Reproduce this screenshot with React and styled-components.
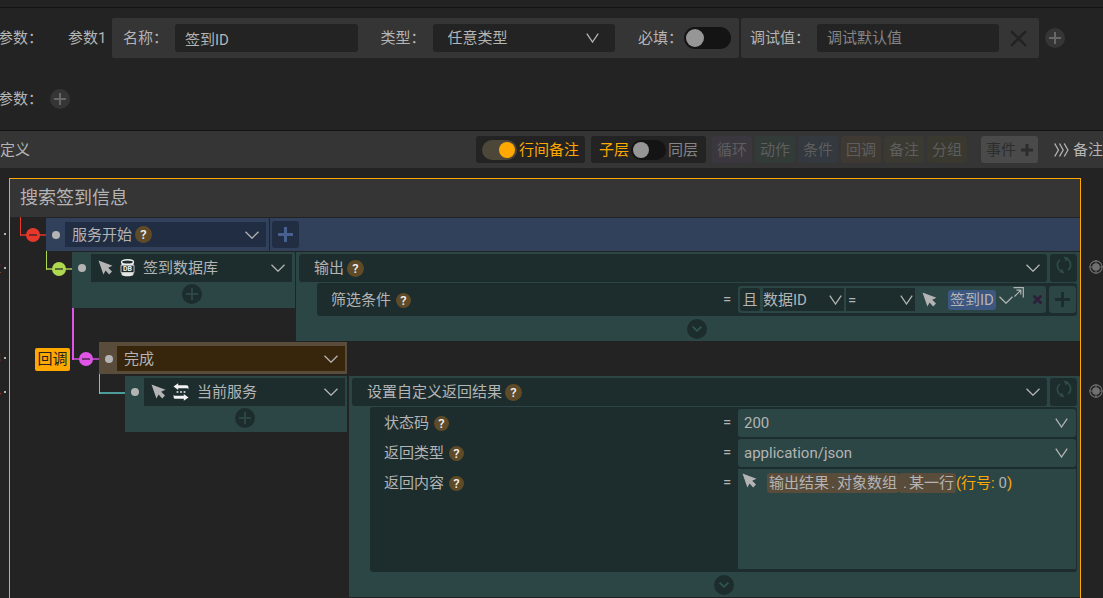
import React, { useState } from "react";
import styled, { createGlobalStyle } from "styled-components";

const GlobalStyle = createGlobalStyle`
  * {
    box-sizing: border-box;
  }

  body {
    margin: 0;
    background: #232323;
    color: #b4b4b4;
    font-family: Roboto, "Noto Sans CJK SC", sans-serif;
    font-size: 15px;
    line-height: 20px;
    overflow: hidden;
  }

  button,
  input,
  select {
    margin: 0;
    padding: 0;
    border: 0;
    color: inherit;
    font: inherit;
  }

  button {
    flex: none;
    cursor: pointer;
  }
`;

const tones = {
  blue: { block: "#31405b", cell: "#202d42" },
  teal: { block: "#2c4646", cell: "#1d2d2d" },
  brown: { block: "#5a4c3b", cell: "#38260c" },
};

const Page = styled.div`
  display: flex;
  flex-direction: column;
  height: 100vh;
  overflow: hidden;
  white-space: nowrap;
`;

const TopEdge = styled.div`
  flex: none;
  height: 8px;
  border-bottom: 1px solid #141414;
`;

/* params */

const Params = styled.section`
  display: flex;
  flex: none;
  flex-direction: column;
  gap: 21px;
  padding: 10px 38px 11px 0;
`;

const ParamRow = styled.div`
  display: flex;
  align-items: center;
  height: 40px;
`;

const ParamTitle = styled.div`
  display: flex;
  flex: none;
  justify-content: flex-end;
  width: 43px;
  margin-right: 7px;
`;

const ParamIndex = styled.div`
  flex: none;
  width: 44px;
  margin-left: 18px;
`;

const ParamCard = styled.div`
  display: flex;
  flex: ${(props) => props.$grow} 1 ${(props) => props.$basis}px;
  align-items: center;
  min-width: 0;
  height: 40px;
  padding: ${(props) => props.$padding};
  margin-right: ${(props) => props.$gap}px;
  background: #353535;
  border-radius: 2px;
`;

const FieldLabel = styled.label`
  flex: none;
  margin-right: ${(props) => (props.$tight ? 1 : 7)}px;
`;

const TextInput = styled.input`
  flex: 1;
  min-width: 0;
  height: 28px;
  padding: 0 10px;
  background: #232323;
  border-radius: 3px;
  outline: none;

  &::placeholder {
    color: #858585;
  }
`;

const DarkSelect = styled.div`
  position: relative;
  display: flex;
  flex: 1;
  align-items: center;
  min-width: 0;
  height: 28px;
  margin-right: 23px;
  background: #232323;
  border-radius: 3px;
`;

const NameSlot = styled.div`
  display: flex;
  flex: 1;
  min-width: 0;
  margin-right: 23px;
`;

const ClearButton = styled.button`
  display: flex;
  padding: 0 3px 0 11px;
  background: none;
  color: #232323;
`;

const RoundButton = styled.button`
  display: flex;
  align-items: center;
  justify-content: center;
  width: 20px;
  height: 20px;
  background: ${(props) => props.$bg};
  border-radius: 50%;
  color: ${(props) => props.$color};
`;

const Switch = styled.input`
  display: flex;
  flex: none;
  align-items: center;
  width: ${(props) => props.$width}px;
  height: ${(props) => props.$height}px;
  padding: 0 2px;
  appearance: none;
  background: #141414;
  border-radius: 11px;
  cursor: pointer;

  &::before {
    content: "";
    width: ${(props) => props.$knob}px;
    height: ${(props) => props.$knob}px;
    background: #969696;
    border-radius: 50%;
  }

  &:checked {
    justify-content: flex-end;
    background: #4d473a;
  }

  &:checked::before {
    background: #ffa800;
  }
`;

/* toolbar */

const Toolbar = styled.header`
  display: flex;
  flex: none;
  align-items: center;
  height: 38px;
  background: #353535;
  border-top: 1px solid #141414;
`;

const ToolbarTitle = styled.div`
  margin-right: auto;
`;

const Pill = styled.label`
  display: flex;
  flex: none;
  gap: 2px;
  align-items: center;
  height: 27px;
  padding: 0 ${(props) => props.$padding}px;
  margin-right: 6px;
  background: #232323;
  border-radius: 3px;
`;

const PillText = styled.span`
  color: ${(props) => (props.$active ? "#ffa800" : "#858585")};
`;

const TypeButtons = styled.div`
  display: flex;
  flex: none;
  gap: 3px;
`;

const TypeButton = styled.button`
  width: 40px;
  height: 27px;
  background: ${(props) => props.$bg};
  border-radius: 3px;
  color: #5e5e5e;
`;

const EventButton = styled.button`
  display: flex;
  gap: 5px;
  align-items: center;
  height: 27px;
  padding: 0 5px;
  margin: 0 16px 0 14px;
  background: #4a4a4a;
  border-radius: 3px;
  color: #2d2d2d;
`;

const MoreButton = styled.button`
  display: flex;
  gap: 4px;
  align-items: center;
  width: 49px;
  background: none;
`;

/* workflow board */

const Board = styled.main`
  display: grid;
  flex: 1;
  grid-template-columns: 9px minmax(0, 1fr) 22px;
  min-height: 0;
  padding-top: 10px;
`;

const Gutter = styled.div`
  display: flex;
  flex-direction: column;
  padding-top: 40px;
  overflow: hidden;
`;

const GutterLine = styled.div`
  display: flex;
  flex: none;
  gap: 3px;
  align-items: center;
  justify-content: flex-end;
  width: 100%;
  height: 32px;
  padding-right: 3px;
  margin-bottom: ${(props) => props.$after}px;
  color: ${(props) => props.$color};

  &::after {
    content: "";
    flex: none;
    width: 2px;
    height: 2px;
    background: #b4b4b4;
  }
`;

const BreakPoint = styled.div`
  display: flex;
  flex: none;
  align-items: center;
  justify-content: center;
  height: 30px;
  padding-left: 8px;
  margin-bottom: ${(props) => props.$after}px;
  color: #707070;

  &:first-child {
    margin-top: 34px;
  }
`;

const Flow = styled.section`
  display: flex;
  flex-direction: column;
  border: 1px solid #ffa800;
  border-bottom: 0;
`;

const FlowTitle = styled.h2`
  flex: none;
  height: 38px;
  padding-left: 10px;
  margin: 0 0 1px;
  background: #353535;
  font-size: 18px;
  font-weight: 400;
  line-height: 38px;
`;

const Step = styled.div`
  display: flex;
  flex: none;
  align-items: flex-start;
  padding-left: ${(props) => props.$indent}px;
  margin-bottom: 1px;
`;

const StepTag = styled.div`
  flex: none;
  width: 35px;
  height: 23px;
  margin: 6px 2px 0 0;
  background: #ffa800;
  border-radius: 2px;
  color: #232323;
  line-height: 23px;
  text-align: center;
`;

const Branch = styled.div`
  position: relative;
  display: flex;
  flex: none;
  align-items: center;
  justify-content: center;
  width: ${(props) => (props.$thick ? 27 : 26)}px;
  height: 33px;
  padding-top: 1px;

  &::before,
  &::after {
    content: "";
    position: absolute;
    left: 0;
    background: ${(props) => props.$color};
  }

  &::before {
    top: ${(props) => -props.$rise}px;
    width: ${(props) => (props.$thick ? 2 : 1)}px;
    height: ${(props) => props.$rise + 18}px;
  }

  &::after {
    top: 16px;
    right: 0;
    height: 2px;
    opacity: 0.7;
  }
`;

const FoldButton = styled.button`
  position: relative;
  z-index: 1;
  display: flex;
  align-items: center;
  justify-content: center;
  width: 14px;
  height: 14px;
  background: ${(props) => props.$color};
  border-radius: 50%;

  &::before {
    content: "";
    width: 8px;
    height: 2px;
    background: #23232399;
  }
`;

const Block = styled.div`
  flex: ${(props) => (props.$width ? `0 0 ${props.$width}px` : "1 1 0")};
  min-width: 0;
  height: ${(props) => (props.$height ? `${props.$height}px` : "auto")};
  padding: ${(props) => props.$padding || "0"};
  margin-right: ${(props) => props.$gap || 0}px;
  background: ${(props) => tones[props.$tone].block};
`;

const HeadLine = styled.div`
  display: flex;
  align-items: center;
`;

const Handle = styled.span`
  flex: none;
  width: 8px;
  height: 8px;
  margin: 0 ${(props) => props.$side}px 0 6px;
  background: #b4b4b4;
  border-radius: 50%;
`;

const Cell = styled.div`
  display: flex;
  flex: 1;
  align-items: center;
  min-width: 0;
  height: ${(props) => props.$height}px;
  padding: 0 7px 0 ${(props) => props.$inset}px;
  background: ${(props) => tones[props.$tone].cell};
  border-radius: ${(props) => (props.$round ? 3 : 0)}px;
`;

const InlineSelect = styled.select`
  flex: none;
  field-sizing: content;
  appearance: none;
  background: none;
  outline: none;
  cursor: pointer;
`;

const FillSelect = styled.select`
  flex: 1;
  width: 100%;
  min-width: 0;
  height: 100%;
  padding: 0 24px 0 ${(props) => props.$inset}px;
  appearance: none;
  background: none;
  outline: none;
  cursor: pointer;
`;

/* sits on top of the select, clicks go through to it */
const SelectArrow = styled.span`
  position: absolute;
  right: ${(props) => props.$right}px;
  display: flex;
  pointer-events: none;
`;

const CellArrow = styled.span`
  display: flex;
  margin-left: auto;
`;

const CellIcons = styled.span`
  display: flex;
  flex: none;
  gap: 7px;
  align-items: center;
  margin-right: 8px;
`;

const Help = styled.button`
  width: ${(props) => props.$size}px;
  height: ${(props) => props.$size}px;
  margin-left: ${(props) => props.$space}px;
  background: #5f4b27;
  border-radius: 50%;
  color: #f0f0f0;
  font-size: 13px;
  font-weight: 500;
  line-height: ${(props) => props.$size}px;
`;

const SquareButton = styled.button`
  display: flex;
  align-items: center;
  justify-content: center;
  width: 27px;
  height: ${(props) => props.$height}px;
  background: ${(props) => props.$bg};
  border-radius: 3px;
  color: ${(props) => props.$color};
`;

const RefreshButton = styled(SquareButton)`
  align-items: flex-start;
  padding-top: 2px;
`;

const Center = styled.div`
  display: flex;
  align-items: center;
  justify-content: center;
  height: ${(props) => props.$height}px;
  padding-left: ${(props) => props.$shift || 0}px;
`;

const Detail = styled.div`
  padding-left: 18px;
`;

const DetailPanel = styled.div`
  display: flex;
  flex-direction: column;
  gap: 2px;
  padding: ${(props) => props.$padding};
  margin-top: 1px;
  background: #1d2d2d;
  border-radius: 3px;
`;

const DetailRow = styled.div`
  display: grid;
  grid-template-columns: minmax(0, 1fr) 15px 338px;
`;

const DetailLabel = styled.div`
  display: flex;
  align-items: center;
  height: 28px;
`;

const Equals = styled.span`
  height: 26px;
  line-height: 26px;
`;

const Field = styled.div`
  position: relative;
  display: flex;
  align-items: center;
  height: 28px;
  background: #2c4646;
  border-radius: 3px;
`;

const ConditionRow = styled.div`
  display: flex;
  gap: 3px;
`;

const Condition = styled.div`
  display: flex;
  flex: 1;
  align-items: center;
  height: 27px;
  padding: 0 4px 0 2px;
  background: #2c4646;
  border-radius: 3px;
`;

const LogicButton = styled.button`
  width: 20px;
  height: 23px;
  margin-right: 3px;
  background: #1d2d2d;
  border-radius: 3px;
`;

const ConditionSelect = styled.div`
  position: relative;
  display: flex;
  flex: 0 0 ${(props) => props.$width}px;
  align-items: center;
  height: 23px;
  margin-right: 2px;
  background: #1d2d2d;
`;

const ValueIcon = styled.span`
  display: flex;
  margin-left: 5px;
`;

const ValueTag = styled.span`
  height: 20px;
  padding: 0 2px;
  margin: 0 3px 0 11px;
  background: #3c5780;
  border-radius: 3px;
`;

const CornerButton = styled.button`
  display: flex;
  align-self: flex-start;
  padding-top: 1px;
  background: none;
`;

const RemoveButton = styled.button`
  display: flex;
  margin-left: auto;
  background: none;
  color: #2e2038;
`;

const Expression = styled.div`
  display: flex;
  gap: 10px;
  align-items: flex-start;
  height: 100px;
  padding: 4px;
  background: #2c4646;
`;

const Token = styled.span`
  display: inline-block;
  height: 20px;
  padding: 0 2px;
  background: #5a4c3b;
  border-radius: 3px;
`;

const Dot = styled.span`
  padding: 0 2px;
`;

const Hint = styled.span`
  color: #ffa800;
`;

const Chevron = ({ steep }) =>
  steep ? (
    <svg width="13" height="10" viewBox="0 0 13 10" fill="none" stroke="currentColor" strokeWidth="1.3">
      <path d="M0.8 0.7 6.5 9 12.2 0.7" />
    </svg>
  ) : (
    <svg width="14" height="8" viewBox="0 0 14 8" fill="none" stroke="currentColor" strokeWidth="1.3">
      <path d="M0.5 0.7 7 7.2 13.5 0.7" />
    </svg>
  );

const Plus = ({ size = 12, weight = 2 }) => (
  <svg width={size} height={size} viewBox={`0 0 ${size} ${size}`} stroke="currentColor" strokeWidth={weight}>
    <path d={`M0 ${size / 2}H${size}M${size / 2} 0V${size}`} />
  </svg>
);

const Cross = ({ size, weight }) => (
  <svg width={size} height={size} viewBox="0 0 16 16" stroke="currentColor" strokeWidth={weight}>
    <path d="M1 1 15 15M15 1 1 15" />
  </svg>
);

const Cursor = () => (
  <svg width="15" height="16" viewBox="0 0 15 16" fill="#b4b4b4">
    <path d="M0.5 0.5 14.5 5.8 10.2 7.8 14 11.6 11.2 14.4 7.6 10.6 5.4 14.4Z" />
  </svg>
);

const Database = () => (
  <svg width="15" height="18" viewBox="0 0 15 18" fill="none">
    <path d="M1.5 3V15.2C1.5 18 13.5 18 13.5 15.2V3" fill="#e6e6e6" />
    <path d="M1 6.2H14V13.6H1Z" fill="#1d2d2d" stroke="#e6e6e6" strokeWidth="0.8" />
    <ellipse cx="7.5" cy="3" rx="6" ry="2.2" fill="#1d2d2d" stroke="#f2f2f2" strokeWidth="1.4" />
    <text x="7.5" y="12.4" fill="#f2f2f2" fontSize="7" fontWeight="700" textAnchor="middle">
      DB
    </text>
  </svg>
);

const Exchange = () => (
  <svg width="16" height="18" viewBox="0 0 16 18" fill="#f2f2f2">
    <path d="M0.5 3.6 5.2 0.2V2.2H13.6C14.8 2.2 15.4 3 15.4 4V6.6C15 5.6 14.4 5.2 13.6 5.2H5.2V7Z" />
    <path d="M15.5 14.4 10.8 17.8V15.8H2.4C1.2 15.8 0.6 15 0.6 14V11.4C1 12.4 1.6 12.8 2.4 12.8H10.8V11Z" />
    <path d="M3.6 8.3H5.4V9.7H3.6ZM7.1 8.3H8.9V9.7H7.1ZM10.6 8.3H12.4V9.7H10.6Z" />
  </svg>
);

const Refresh = () => (
  <svg width="16" height="18" viewBox="0 0 16 18" fill="none" stroke="currentColor" strokeWidth="1.6">
    <path d="M5.4 15.4A6.8 6.8 0 0 1 4 3.8" />
    <path d="M10.6 2.6A6.8 6.8 0 0 1 12 14.2" />
    <path d="M7.6 0.6 12.6 1.8 10 5.6ZM8.4 17.4 3.4 16.2 6 12.4Z" fill="currentColor" stroke="none" />
  </svg>
);

const Target = () => (
  <svg width="16" height="16" viewBox="0 0 16 16" fill="none" stroke="currentColor">
    <circle cx="8" cy="8" r="7" strokeWidth="1.2" />
    <circle cx="8" cy="8" r="4.4" fill="currentColor" stroke="none" />
    <path d="M8 0V4M8 12V16M0 8H4M12 8H16" strokeWidth="1.2" />
  </svg>
);

const PopOut = () => (
  <svg width="11" height="11" viewBox="0 0 11 11" fill="none" stroke="currentColor" strokeWidth="1.2">
    <path d="M0.5 0.7H10.3V10.5" />
    <path d="M1.5 9.5 7.6 3.4M3.4 3.2H7.8V7.6" />
  </svg>
);

const TripleArrow = () => (
  <svg width="17" height="16" viewBox="0 0 17 16" fill="none" stroke="currentColor" strokeWidth="1.5">
    <path d="M0.8 0.6 5 8 0.8 15.4M6.2 0.6 10.4 8 6.2 15.4M11.6 0.6 15.8 8 11.6 15.4" />
  </svg>
);

const typeButtons = [
  { name: "循环", bg: "#3a373e" },
  { name: "动作", bg: "#333b39" },
  { name: "条件", bg: "#34383f" },
  { name: "回调", bg: "#3e3a33" },
  { name: "备注", bg: "#3a3932" },
  { name: "分组", bg: "#393930" },
];

const StepHead = ({ tone, width, height, cellHeight, padding, gap, side = 5, inset = 7, label, icons, help, addable }) => (
  <Block $tone={tone} $width={width} $height={height} $padding={padding} $gap={gap}>
    <HeadLine>
      <Handle $side={side} />
      <Cell $tone={tone} $height={cellHeight} $inset={inset}>
        {icons && <CellIcons>{icons}</CellIcons>}
        <InlineSelect aria-label={label}>
          <option>{label}</option>
        </InlineSelect>
        {help && (
          <Help $size={17} $space={3} aria-label="帮助">
            ?
          </Help>
        )}
        <CellArrow>
          <Chevron />
        </CellArrow>
      </Cell>
    </HeadLine>
    {addable && (
      <Center $height={24} $shift={19}>
        <RoundButton $bg="#1d2d2d" $color="#2c4646" aria-label="添加">
          <Plus />
        </RoundButton>
      </Center>
    )}
  </Block>
);

const StepDetail = ({ title, panelPadding, children }) => (
  <Block $tone="teal" $padding="2px 3px 0 3px">
    <ConditionRow>
      <Cell $tone="teal" $height={28} $inset={15} $round>
        <InlineSelect aria-label={title}>
          <option>{title}</option>
        </InlineSelect>
        <Help $size={17} $space={3} aria-label="帮助">
          ?
        </Help>
        <CellArrow>
          <Chevron />
        </CellArrow>
      </Cell>
      <RefreshButton $height={28} $bg="#1d2d2d" $color="#2f4c4a" aria-label="刷新">
        <Refresh />
      </RefreshButton>
    </ConditionRow>
    <Detail>
      <DetailPanel $padding={panelPadding}>{children}</DetailPanel>
      <Center $height={25}>
        <RoundButton $bg="#1d2d2d" $color="#2f5552" aria-label="展开">
          <svg width="10" height="6" viewBox="0 0 10 6" fill="none" stroke="currentColor" strokeWidth="1.8">
            <path d="M0.6 0.6 5 4.8 9.4 0.6" />
          </svg>
        </RoundButton>
      </Center>
    </Detail>
  </Block>
);

const DetailField = ({ label, children }) => (
  <DetailRow>
    <DetailLabel>
      {label}
      <Help $size={15} $space={5} aria-label="帮助">
        ?
      </Help>
    </DetailLabel>
    <Equals>=</Equals>
    {children}
  </DetailRow>
);

const App = () => {
  const [name, setName] = useState("签到ID");
  const [required, setRequired] = useState(false);
  const [showNotes, setShowNotes] = useState(true);
  const [sameLevel, setSameLevel] = useState(false);

  return (
    <Page>
      <GlobalStyle />
      <TopEdge />

      <Params>
        <ParamRow>
          <ParamTitle>参数：</ParamTitle>
          <ParamIndex>参数1</ParamIndex>
          <ParamCard $grow={2} $basis={627} $padding="0 8px 0 11px" $gap={2}>
            <FieldLabel htmlFor="param-name">名称：</FieldLabel>
            <NameSlot>
              <TextInput id="param-name" value={name} onChange={(e) => setName(e.target.value)} />
            </NameSlot>
            <FieldLabel htmlFor="param-type">类型：</FieldLabel>
            <DarkSelect>
              <FillSelect id="param-type" $inset={15}>
                <option>任意类型</option>
              </FillSelect>
              <SelectArrow $right={16}>
                <Chevron steep />
              </SelectArrow>
            </DarkSelect>
            <FieldLabel htmlFor="param-required" $tight>
              必填：
            </FieldLabel>
            <Switch
              id="param-required"
              type="checkbox"
              $width={47}
              $height={22}
              $knob={18}
              checked={required}
              onChange={(e) => setRequired(e.target.checked)}
            />
          </ParamCard>
          <ParamCard $grow={1} $basis={298} $padding="0 9px" $gap={6}>
            <FieldLabel htmlFor="param-debug">调试值：</FieldLabel>
            <TextInput id="param-debug" placeholder="调试默认值" />
            <ClearButton aria-label="删除">
              <Cross size={17} weight={2.4} />
            </ClearButton>
          </ParamCard>
          <RoundButton $bg="#353535" $color="#666666" aria-label="添加参数">
            <Plus />
          </RoundButton>
        </ParamRow>
        <ParamRow>
          <ParamTitle>参数：</ParamTitle>
          <RoundButton $bg="#353535" $color="#666666" aria-label="添加参数">
            <Plus />
          </RoundButton>
        </ParamRow>
      </Params>

      <Toolbar>
        <ToolbarTitle>定义</ToolbarTitle>
        <Pill $padding={6}>
          <Switch
            type="checkbox"
            $width={35}
            $height={20}
            $knob={16}
            checked={showNotes}
            onChange={(e) => setShowNotes(e.target.checked)}
          />
          <PillText $active={showNotes}>行间备注</PillText>
        </Pill>
        <Pill $padding={8}>
          <PillText $active={!sameLevel}>子层</PillText>
          <Switch
            type="checkbox"
            $width={35}
            $height={20}
            $knob={16}
            checked={sameLevel}
            onChange={(e) => setSameLevel(e.target.checked)}
          />
          <PillText $active={sameLevel}>同层</PillText>
        </Pill>
        <TypeButtons>
          {typeButtons.map((item) => (
            <TypeButton key={item.name} $bg={item.bg}>
              {item.name}
            </TypeButton>
          ))}
        </TypeButtons>
        <EventButton>
          事件
          <Plus weight={3} />
        </EventButton>
        <MoreButton>
          <TripleArrow />
          备注
        </MoreButton>
      </Toolbar>

      <Board>
        <Gutter>
          <GutterLine $after={2} $color="#b4b4b4">1</GutterLine>
          <GutterLine $after={58} $color="#a8744a">2</GutterLine>
          <GutterLine $after={2} $color="#c08040">3</GutterLine>
          <GutterLine $after={0} $color="#c0392b">4</GutterLine>
        </Gutter>

        <Flow>
          <FlowTitle>搜索签到信息</FlowTitle>

          <Step $indent={10}>
            <Branch $color="#e8382c" $rise={1}>
              <FoldButton $color="#e8382c" aria-label="折叠" />
            </Branch>
            <StepHead
              tone="blue"
              width={223}
              height={33}
              cellHeight={25}
              padding="4px 3px 4px 0"
              gap={1}
              label="服务开始"
              help
            />
            <Block $tone="blue" $height={33} $padding="3px 2px">
              <SquareButton $height={27} $bg="#202d42" $color="#47618f" aria-label="添加">
                <Plus size={15} weight={3} />
              </SquareButton>
            </Block>
          </Step>

          <Step $indent={36}>
            <Branch $color="#aed850" $rise={1}>
              <FoldButton $color="#aed850" aria-label="折叠" />
            </Branch>
            <StepHead
              tone="teal"
              width={223}
              height={56}
              cellHeight={28}
              padding="2px 3px 0 0"
              gap={1}
              label="签到数据库"
              icons={
                <>
                  <Cursor />
                  <Database />
                </>
              }
              addable
            />
            <StepDetail title="输出" panelPadding="3px 1px 2px 14px">
              <DetailField label="筛选条件">
                <ConditionRow>
                  <Condition>
                    <LogicButton>且</LogicButton>
                    <ConditionSelect $width={81}>
                      <FillSelect aria-label="字段" $inset={0}>
                        <option>数据ID</option>
                      </FillSelect>
                      <SelectArrow $right={2}>
                        <Chevron steep />
                      </SelectArrow>
                    </ConditionSelect>
                    <ConditionSelect $width={69}>
                      <FillSelect aria-label="比较" $inset={2}>
                        <option>=</option>
                      </FillSelect>
                      <SelectArrow $right={2}>
                        <Chevron steep />
                      </SelectArrow>
                    </ConditionSelect>
                    <ValueIcon>
                      <Cursor />
                    </ValueIcon>
                    <ValueTag>签到ID</ValueTag>
                    <Chevron />
                    <CornerButton aria-label="弹出编辑">
                      <PopOut />
                    </CornerButton>
                    <RemoveButton aria-label="删除">
                      <Cross size={9} weight={5} />
                    </RemoveButton>
                  </Condition>
                  <SquareButton $height={27} $bg="#2c4646" $color="#1d2d2d" aria-label="添加条件">
                    <Plus size={15} weight={3} />
                  </SquareButton>
                </ConditionRow>
              </DetailField>
            </StepDetail>
          </Step>

          <Step $indent={25}>
            <StepTag>回调</StepTag>
            <Branch $color="#e055e8" $rise={34} $thick>
              <FoldButton $color="#e055e8" aria-label="折叠" />
            </Branch>
            <StepHead
              tone="brown"
              width={248}
              height={32}
              cellHeight={25}
              padding="4px 2px 3px 0"
              side={4}
              label="完成"
            />
          </Step>

          <Step $indent={89}>
            <Branch $color="#5fd0cf" $rise={2} />
            <StepHead
              tone="teal"
              width={222}
              height={56}
              cellHeight={28}
              padding="2px 2px 0 0"
              gap={2}
              label="当前服务"
              icons={
                <>
                  <Cursor />
                  <Exchange />
                </>
              }
              addable
            />
            <StepDetail title="设置自定义返回结果" panelPadding="2px 1px 3px 14px">
              <DetailField label="状态码">
                <Field>
                  <FillSelect aria-label="状态码" $inset={6}>
                    <option>200</option>
                  </FillSelect>
                  <SelectArrow $right={8}>
                    <Chevron steep />
                  </SelectArrow>
                </Field>
              </DetailField>
              <DetailField label="返回类型">
                <Field>
                  <FillSelect aria-label="返回类型" $inset={6}>
                    <option>application/json</option>
                  </FillSelect>
                  <SelectArrow $right={8}>
                    <Chevron steep />
                  </SelectArrow>
                </Field>
              </DetailField>
              <DetailField label="返回内容">
                <Expression role="textbox" aria-label="返回内容">
                  <Cursor />
                  <span>
                    <Token>
                      输出结果<Dot>.</Dot>对象数组
                    </Token>
                    <Token>
                      <Dot>.</Dot>某一行
                    </Token>
                    <Hint>(行号: </Hint>0<Hint>)</Hint>
                  </span>
                </Expression>
              </DetailField>
            </StepDetail>
          </Step>
        </Flow>

        <Gutter>
          <BreakPoint $after={94}>
            <Target />
          </BreakPoint>
          <BreakPoint $after={0}>
            <Target />
          </BreakPoint>
        </Gutter>
      </Board>
    </Page>
  );
};

export default App;
